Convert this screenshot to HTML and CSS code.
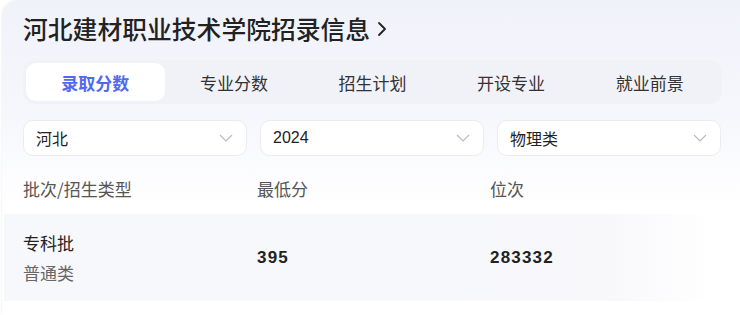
FILE: index.html
```html
<!DOCTYPE html>
<html lang="zh-CN">
<head>
    <meta charset="UTF-8">
    <title>河北建材职业技术学院招录信息</title>
    <link rel="stylesheet" href="styles.css">
</head>
<body>
    <div class="card">
        <div class="card-title">
            河北建材职业技术学院招录信息
            <svg class="title-arrow" width="12" height="18" viewBox="0 0 12 18"><path d="M3 3 L9 9 L3 15" fill="none" stroke="#222" stroke-width="1.8" stroke-linecap="round" stroke-linejoin="round"/></svg>
        </div>

        <div class="tabs">
            <div class="tab active">录取分数</div>
            <div class="tab">专业分数</div>
            <div class="tab">招生计划</div>
            <div class="tab">开设专业</div>
            <div class="tab">就业前景</div>
        </div>

        <div class="filters">
            <div class="select">
                <span>河北</span>
                <svg class="caret" width="14" height="8" viewBox="0 0 14 8"><path d="M1 1 L7 7 L13 1" fill="none" stroke="#b8bcc6" stroke-width="1.2"/></svg>
            </div>
            <div class="select">
                <span>2024</span>
                <svg class="caret" width="14" height="8" viewBox="0 0 14 8"><path d="M1 1 L7 7 L13 1" fill="none" stroke="#b8bcc6" stroke-width="1.2"/></svg>
            </div>
            <div class="select">
                <span>物理类</span>
                <svg class="caret" width="14" height="8" viewBox="0 0 14 8"><path d="M1 1 L7 7 L13 1" fill="none" stroke="#b8bcc6" stroke-width="1.2"/></svg>
            </div>
        </div>

        <div class="table">
            <div class="row head">
                <div class="col">批次/招生类型</div>
                <div class="col">最低分</div>
                <div class="col">位次</div>
            </div>
            <div class="row data">
                <div class="col">
                    <div class="batch">专科批</div>
                    <div class="type">普通类</div>
                </div>
                <div class="col num">395</div>
                <div class="col num">283332</div>
            </div>
        </div>
    </div>
</body>
</html>
```

FILE: styles.css
```css
* {
    margin: 0;
    padding: 0;
    box-sizing: border-box;
}

body {
    font-family: "Noto Sans CJK SC", "Noto Sans", sans-serif;
    background: #fff;
    width: 740px;
    height: 315px;
    overflow: hidden;
    padding-left: 2px;
}

.card {
    width: 760px;
    height: 330px;
    border-radius: 16px;
    background: linear-gradient(180deg, #f0f2fa 0%, #f6f7fc 35%, #ffffff 62%);
    box-shadow: 0 0 3px rgba(0, 0, 0, 0.08);
    padding: 11px 0 0 21px;
}

.card-title {
    display: flex;
    align-items: center;
    gap: 6px;
    font-size: 24.8px;
    font-weight: 500;
    color: #222;
    height: 34px;
}

.title-arrow {
    margin-top: 1px;
}

.tabs {
    display: grid;
    grid-template-columns: repeat(5, 1fr);
    width: 699px;
    height: 44px;
    margin-top: 15px;
    padding: 3px;
    background: #f1f2f7;
    border-radius: 12px;
}

.tab {
    display: flex;
    align-items: center;
    justify-content: center;
    font-size: 17px;
    color: #333;
    border-radius: 10px;
}

.tab.active {
    background: #fff;
    color: #5268f0;
    font-weight: 700;
}

.filters {
    display: flex;
    gap: 13px;
    margin-top: 16px;
}

.select {
    width: 224px;
    height: 36px;
    background: #fff;
    border: 1px solid #ebebf0;
    border-radius: 10px;
    display: flex;
    align-items: center;
    justify-content: space-between;
    padding: 0 13px 0 12px;
    font-family: "Liberation Sans", "Noto Sans CJK SC", sans-serif;
    font-size: 16px;
    color: #222;
}

.table {
    margin-top: 12px;
    margin-left: -19px;
}

.row {
    display: grid;
    grid-template-columns: 234px 233px 1fr;
    padding-left: 19px;
}

.row.head {
    height: 40px;
    align-items: center;
    font-size: 17px;
    color: #555;
}

.row.data {
    margin-top: 6px;
    width: 710px;
    height: 87px;
    align-items: center;
    background: linear-gradient(90deg, #f7f8fb 0%, #f8f8fb 85%, #ffffff 100%);
}

.batch {
    font-size: 17px;
    color: #222;
    line-height: 30px;
}

.type {
    font-size: 17px;
    color: #666;
    line-height: 30px;
}

.num {
    font-family: "Liberation Sans", sans-serif;
    font-size: 17px;
    font-weight: 700;
    color: #222;
    letter-spacing: 1.2px;
}
```
